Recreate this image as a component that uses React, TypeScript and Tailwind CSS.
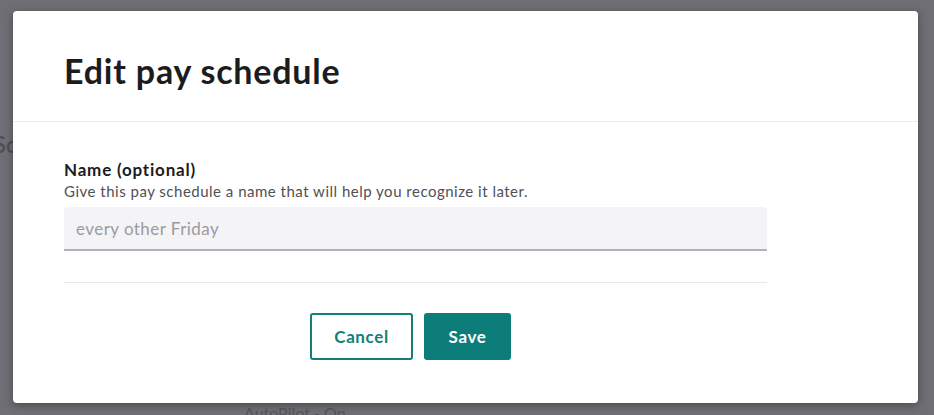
export default function App() {
    return (
        <div className="relative w-[934px] h-[415px] overflow-hidden bg-[#6f6e74] pt-[11px] pl-[13px] font-['Lato',sans-serif]">
            {/* page behind the overlay */}
            <span className="absolute left-[-6px] top-[128px] text-[22px] font-semibold text-[#4f4e55]">Sc</span>
            <span className="absolute left-[244px] top-[401px] text-[16px] text-[#55545a]">AutoPilot - On</span>

            <div className="relative w-[905px] h-[392px] rounded-[4px] bg-white shadow-[0_2px_8px_rgba(0,0,0,0.35)]">
                <div className="h-[111px] border-b border-[#ececee] px-[51px] pt-[40px]">
                    <h1 className="text-[34px] leading-[40px] font-bold text-[#1c1c1e] tracking-[0.8px]">
                        Edit pay schedule
                    </h1>
                </div>

                <div className="px-[51px] pt-[38px]">
                    <div className="w-[703px]">
                        <label className="block text-[17px] leading-[20px] font-bold text-[#1c1c1e] tracking-[0.8px]">
                            Name (optional)
                        </label>
                        <p className="text-[15px] leading-[20px] text-[#505055] mt-[1px] tracking-[0.5px]">
                            Give this pay schedule a name that will help you recognize it later.
                        </p>
                        <input
                            placeholder="every other Friday"
                            className="mt-[6px] block w-full h-[44px] rounded-t-[4px] bg-[#f4f4f6] border-b-2 border-[#b3b3b5] px-[12px] text-[17px] tracking-[0.45px] text-[#1c1c1e] placeholder:text-[#9b9b9f] outline-none"
                        />
                        <div className="mt-[31px] border-t border-[#e8e8ea]" />
                        <div className="flex justify-center gap-[11px] pt-[30px] pr-[10px]">
                            <button className="w-[103px] h-[47px] rounded-[3px] border-2 border-[#127f78] text-[17px] font-bold tracking-[0.6px] text-[#127f78] bg-white">
                                Cancel
                            </button>
                            <button className="w-[87px] h-[47px] rounded-[3px] bg-[#0c7d79] text-[17px] font-bold tracking-[0.6px] text-white">
                                Save
                            </button>
                        </div>
                    </div>
                </div>
            </div>
        </div>
    );
}
